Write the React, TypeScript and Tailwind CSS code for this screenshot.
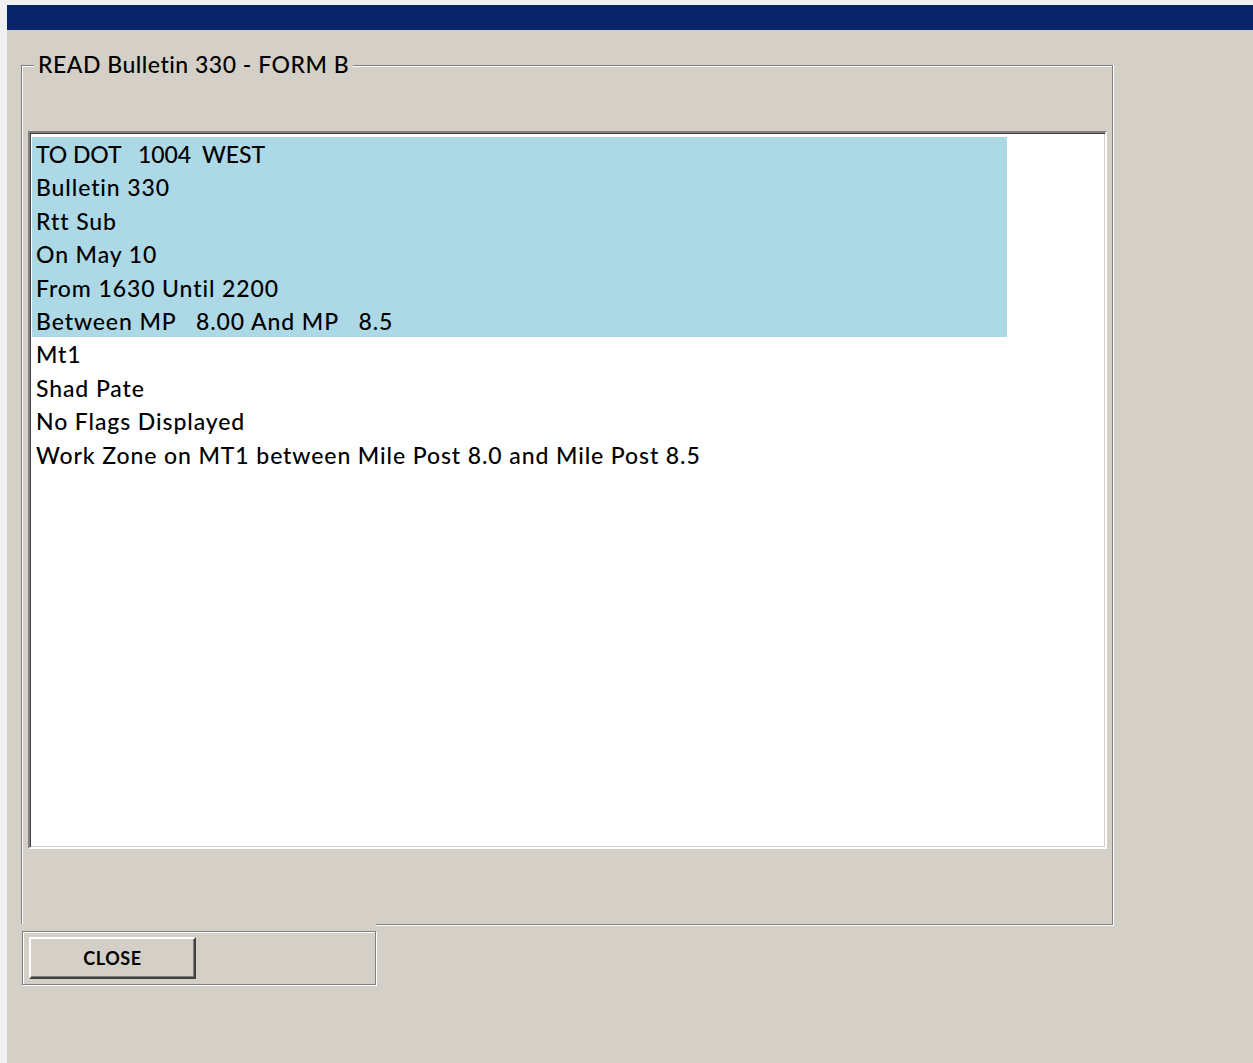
const lines = [
  { text: "TO DOT   1004  WEST", hot: true, tight: true },
  { text: "Bulletin 330", hot: true },
  { text: "Rtt Sub", hot: true },
  { text: "On May 10", hot: true },
  { text: "From 1630 Until 2200", hot: true },
  { text: "Between MP   8.00 And MP   8.5", hot: true },
  { text: "Mt1", hot: false },
  { text: "Shad Pate", hot: false },
  { text: "No Flags Displayed", hot: false },
  { text: "Work Zone on MT1 between Mile Post 8.0 and Mile Post 8.5", hot: false },
]

const ui = { fontFamily: "Lato, 'Open Sans', sans-serif" }

export default function App() {
  return (
    <div className="h-screen overflow-hidden bg-[#f0f0f0] pt-[5px] pl-[7px] flex flex-col" style={ui}>
      {/* title bar */}
      <div className="h-[25px] bg-[#0a246a] shrink-0" />

      <div className="flex-1 bg-[#d4d0c8] pl-[14px] pt-[35px]">
        <div className="w-[1092px]">
          {/* group box: top/left/right edges, bottom edge drawn in the row below */}
          <div className="relative h-[859px] border border-b-0 border-[#808080] shadow-[inset_1px_1px_0_#fff,1px_0_0_#fff] pl-[6px] pr-[5px] pt-[65px]">
            <div className="absolute left-[12px] top-[-15px] bg-[#d4d0c8] px-[4px] text-[23px] leading-[27px] tracking-[0.5px] font-medium text-black">
              READ Bulletin 330 - FORM B
            </div>

            {/* list box */}
            <div className="h-[718px] bg-white border-2 border-t-[#808080] border-l-[#808080] border-r-white border-b-white shadow-[inset_1px_1px_0_#404040,inset_-1px_-1px_0_#d4d0c8] pl-[2px] pt-[4px]">
              {lines.map((l, i) => (
                <div
                  key={i}
                  className={
                    "w-[975px] h-[33.4px] pl-[4px] pt-[1px] text-[23px] leading-[33.4px] font-medium text-black whitespace-pre " +
                    (l.tight ? "tracking-[-0.1px] " : "tracking-[0.9px] ") +
                    (l.hot ? "bg-[#add8e6]" : "bg-white")
                  }
                >
                  {l.text}
                </div>
              ))}
            </div>
          </div>

          <div className="flex items-start">
            {/* button panel */}
            <div className="mt-[7px] w-[354px] h-[54px] ml-[1px] border border-[#808080] shadow-[inset_1px_1px_0_#fff,1px_1px_0_#fff] pl-[6px] pt-[5px]">
              <button className="w-[167px] h-[42px] pt-[1px] bg-[#d4d0c8] border-2 border-t-white border-l-white border-r-[#404040] border-b-[#404040] shadow-[inset_-1px_-1px_0_#808080] flex items-center justify-center text-[18px] tracking-[0.6px] font-bold text-black">
                CLOSE
              </button>
            </div>
            <div className="flex-1 h-[2px] border-t border-[#808080] shadow-[inset_0_1px_0_#fff,1px_0_0_#fff]" />
          </div>
        </div>
      </div>
    </div>
  )
}
